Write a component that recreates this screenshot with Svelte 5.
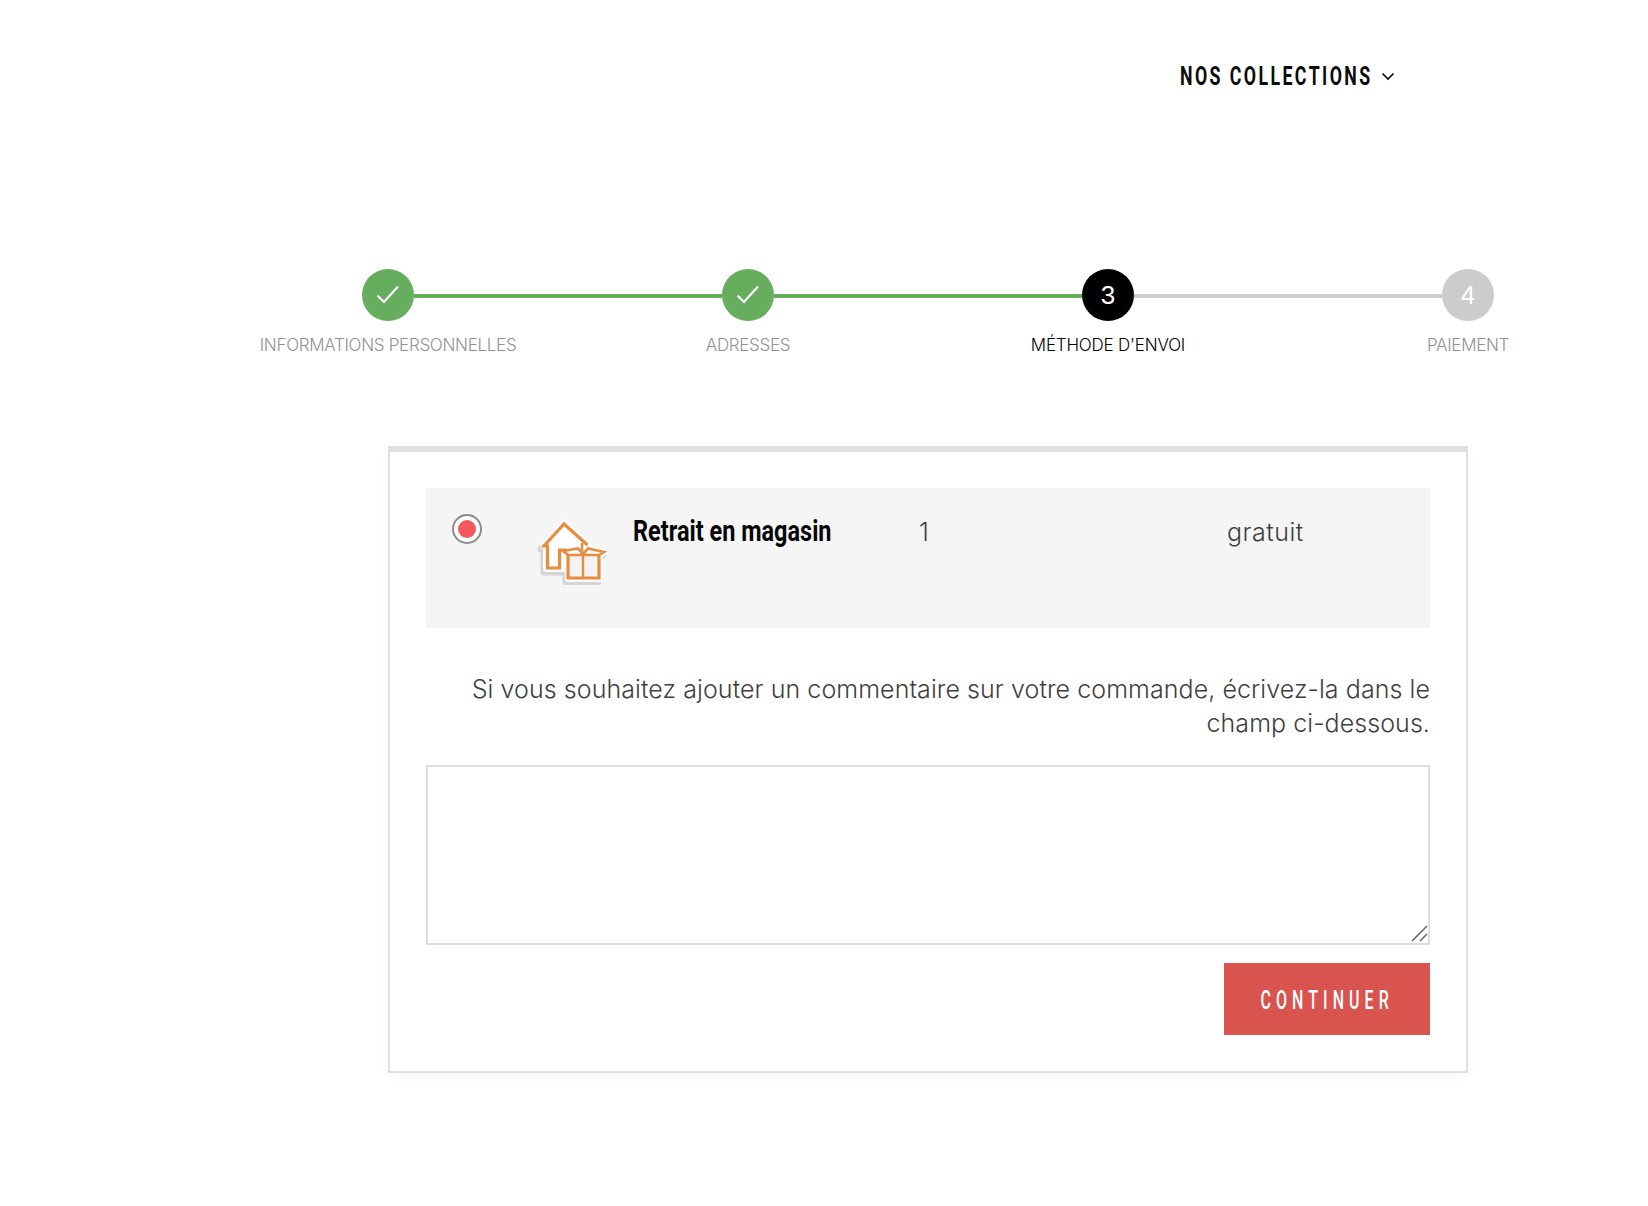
<script>
  const steps = [
    { label: 'INFORMATIONS PERSONNELLES', state: 'done' },
    { label: 'ADRESSES', state: 'done' },
    { label: "MÉTHODE D'ENVOI", state: 'current', n: 3 },
    { label: 'PAIEMENT', state: 'todo', n: 4 }
  ];
</script>

<div class="page">
  <header class="nav">
    <span class="nav-title"><span class="nav-text">NOS COLLECTIONS</span></span>
    <svg class="chevron" width="14" height="9" viewBox="0 0 14 9" aria-hidden="true">
      <path d="M1.5 1.5 L7 7 L12.5 1.5" fill="none" stroke="#111" stroke-width="1.7" />
    </svg>
  </header>

  <ol class="steps">
    {#each steps as s}
      <li class="step {s.state}">
        <span class="circle">
          {#if s.state === 'done'}
            <svg width="52" height="52" viewBox="0 0 52 52" aria-hidden="true">
              <path d="M15.5 26.5 L22 33 L36 17.5" fill="none" stroke="#fff" stroke-width="2.2" />
            </svg>
          {:else}
            {s.n}
          {/if}
        </span>
        <span class="label">{s.label}</span>
      </li>
    {/each}
  </ol>

  <main class="card">
    <section class="option">
      <span class="radio"><span class="dot"></span></span>
      <svg class="pic" width="100" height="75" viewBox="0 0 100 75" aria-hidden="true">
        <defs>
          <path id="shape" d="M23 36 L44 12 L68 35 L68 39 L85 42 L80 45 L80 69 L48 69 L48 59 L26 59 L26 37 Z" />
        </defs>
        <use href="#shape" transform="translate(-2 3)" fill="#d4d4d4" stroke="#d4d4d4" stroke-width="7" stroke-linejoin="round" />
        <use href="#shape" fill="#fefefe" stroke="#fefefe" stroke-width="6" stroke-linejoin="round" />
        <path d="M48 45 L79 45 L79 68 L48 68 Z" fill="#f3f3f3" />
        <g fill="none" stroke="#e68d3f" stroke-width="3.2" stroke-linejoin="miter">
          <path d="M67.5 35 L44 14 L24 36 L27.5 36 L27.5 58 L39.5 58 L39.5 40 L47 40" />
          <path d="M48 44 L48 68 L79 68 L79 44" />
          <path d="M63 45 L63 68" stroke-width="2.4" />
          <path d="M43 41 L58 38.5 L63 44 L68 38.5 L84 42 L79 45 L48 45 Z" stroke-width="2.6" />
          <path d="M62 33 L62 44" stroke-width="2.6" />
        </g>
      </svg>
      <span class="name"><span class="name-text">Retrait en magasin</span></span>
      <span class="qty">1</span>
      <span class="price">gratuit</span>
    </section>

    <p class="hint">Si vous souhaitez ajouter un commentaire sur votre commande, écrivez-la dans le champ ci-dessous.</p>

    <div class="field">
      <textarea class="comment" aria-label="Commentaire"></textarea>
      <svg class="grip" width="18" height="18" viewBox="0 0 18 18" aria-hidden="true">
        <path d="M1 16 L16 1 M9 16 L16 9" stroke="#666" stroke-width="1.5" fill="none" />
      </svg>
    </div>

    <div class="actions">
      <button class="continue" type="button"><span class="continue-text">CONTINUER</span></button>
    </div>
  </main>
</div>

<style>
  :global(body) {
    margin: 0;
    background: #fff;
  }
  .page {
    width: 1648px;
    height: 1206px;
    overflow: hidden;
    font-family: Inter, "Open Sans", sans-serif;
    color: #3f3f3f;
  }
  .nav {
    height: 152px;
    display: flex;
    align-items: center;
    justify-content: flex-end;
    gap: 10px;
    padding-right: 253px;
    box-sizing: border-box;
  }
  .nav-title {
    display: block;
    width: 191px;
  }
  .nav-text {
    display: inline-block;
    white-space: nowrap;
    font-family: Roboto, sans-serif;
    font-weight: 700;
    font-size: 25px;
    letter-spacing: 3.4px;
    color: #0b0b0b;
    transform: scaleX(0.71);
    transform-origin: left center;
  }
  .chevron {
    margin-top: 1px;
  }
  .steps {
    list-style: none;
    margin: 117px 0 0 208px;
    padding: 0;
    display: grid;
    grid-template-columns: repeat(4, 360px);
  }
  .step {
    position: relative;
    display: flex;
    flex-direction: column;
    align-items: center;
  }
  .step:not(:last-child)::after {
    content: '';
    position: absolute;
    left: 206px;
    top: 25px;
    width: 308px;
    height: 4px;
    background: #ccc;
  }
  .step.done::after {
    background: #66ad5e;
  }
  .circle {
    width: 52px;
    height: 52px;
    border-radius: 50%;
    display: flex;
    align-items: center;
    justify-content: center;
    font-family: "Liberation Sans", sans-serif;
    font-size: 26px;
    color: #fff;
    background: #ccc;
  }
  .done .circle {
    background: #66ad5e;
  }
  .current .circle {
    background: #000;
  }
  .label {
    margin-top: 11px;
    font-size: 17px;
    line-height: 26px;
    font-weight: 300;
    letter-spacing: -0.3px;
    color: #929292;
    white-space: nowrap;
  }
  .current .label {
    color: #000;
    letter-spacing: -0.2px;
  }
  .card {
    margin: 88px 0 0 388px;
    width: 1080px;
    height: 627px;
    box-sizing: border-box;
    border: 2px solid #e0e0e0;
    border-top-width: 6px;
    padding: 36px;
    background: #fff;
    box-shadow: 0 4px 8px rgba(0, 0, 0, 0.03);
  }
  .option {
    height: 140px;
    background: #f5f5f5;
    display: flex;
    align-items: flex-start;
    position: relative;
  }
  .radio {
    width: 30px;
    height: 30px;
    box-sizing: border-box;
    border: 2px solid #8a8a8a;
    border-radius: 50%;
    background: #fff;
    margin: 26px 0 0 26px;
    display: flex;
    align-items: center;
    justify-content: center;
    flex: none;
  }
  .dot {
    width: 18px;
    height: 18px;
    border-radius: 50%;
    background: #f05a5f;
  }
  .pic {
    flex: none;
    margin: 22px 0 0 38px;
  }
  .name {
    flex: none;
    width: 286px;
    margin: 23px 0 0 13px;
  }
  .name-text {
    display: inline-block;
    white-space: nowrap;
    font-family: Roboto, sans-serif;
    font-weight: 700;
    font-size: 29px;
    line-height: 40px;
    color: #060606;
    transform: scaleX(0.81);
    transform-origin: left center;
  }
  .qty {
    flex: none;
    width: 308px;
    margin-top: 27px;
    font-size: 25px;
    line-height: 34px;
    font-weight: 300;
  }
  .price {
    flex: none;
    margin-top: 27px;
    font-size: 25px;
    line-height: 34px;
    font-weight: 300;
    letter-spacing: 0.5px;
  }
  .hint {
    margin: 44px 0 0;
    text-align: right;
    font-size: 25px;
    line-height: 34px;
    font-weight: 300;
    letter-spacing: 0.07px;
    color: #3f3f3f;
  }
  .field {
    position: relative;
    margin-top: 25px;
    height: 180px;
  }
  .comment {
    display: block;
    width: 100%;
    height: 180px;
    box-sizing: border-box;
    border: 2px solid #ddd;
    background: #fff;
    outline: none;
    padding: 8px;
    resize: none;
  }
  .grip {
    position: absolute;
    right: 1px;
    bottom: 2px;
    pointer-events: none;
  }
  .actions {
    display: flex;
    justify-content: flex-end;
    margin-top: 18px;
  }
  .continue {
    width: 206px;
    height: 72px;
    border: none;
    background: #d9534f;
    color: #fff;
    padding: 2px 0 0;
    font-family: Roboto, sans-serif;
    font-weight: 500;
    font-size: 25px;
    cursor: pointer;
  }
  .continue-text {
    display: inline-block;
    margin: 0 -20px;
    letter-spacing: 7.9px;
    transform: scaleX(0.64);
    white-space: nowrap;
  }
</style>
